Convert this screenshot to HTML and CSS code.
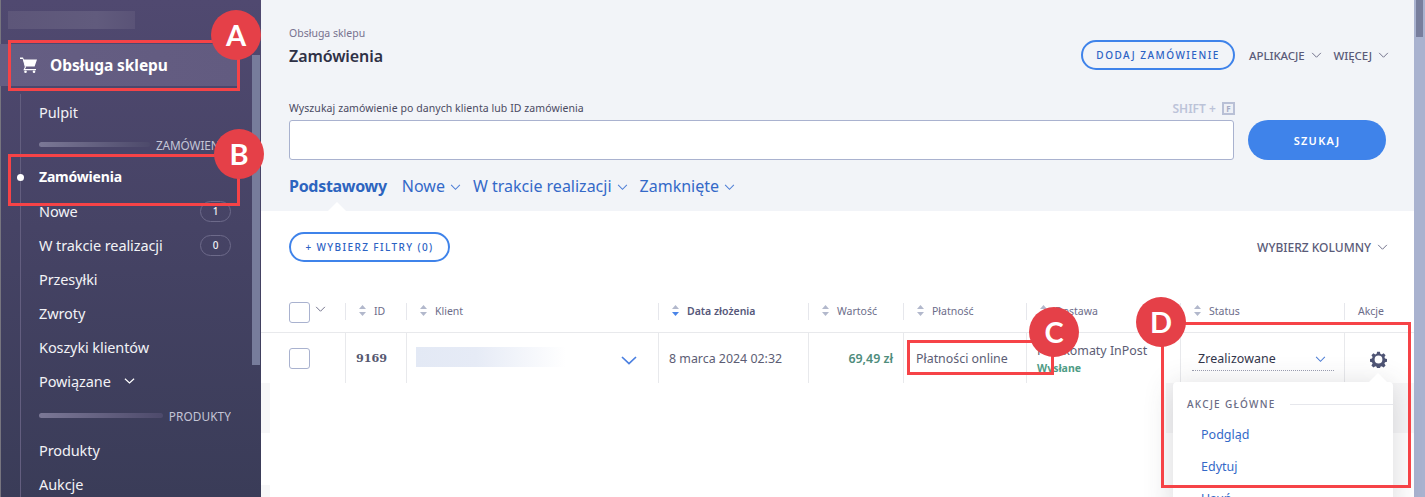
FILE: index.html
```html
<!DOCTYPE html>
<html lang="pl">
<head>
<meta charset="utf-8">
<title>Zamówienia</title>
<link rel="stylesheet" href="styles.css">
</head>
<body>
<div class="app">
  <aside class="sidebar">
    <div class="logo-blur"></div>
    <div class="section-head">
      <svg class="cart" viewBox="0 0 18 16"><path d="M0 .5h3l.8 2H17l-2.400 7H5.400L3 2H0z" fill="#fff"/><path d="M3.800 2.500 6 10.200l-1 1.800h11v1.200H3.400L4.800 10 2.600 1.600z" fill="#fff"/><circle cx="5.500" cy="14.700" r="1.300" fill="#fff"/><circle cx="14" cy="14.700" r="1.300" fill="#fff"/></svg>
      <span>Obsługa sklepu</span>
    </div>
    <nav class="menu">
      <div class="item">Pulpit</div>
      <div class="divider"><i></i><span>ZAMÓWIENIA</span></div>
      <div class="item active">Zamówienia</div>
      <div class="item">Nowe<b class="count">1</b></div>
      <div class="item">W trakcie realizacji<b class="count">0</b></div>
      <div class="item">Przesyłki</div>
      <div class="item">Zwroty</div>
      <div class="item">Koszyki klientów</div>
      <div class="item">Powiązane<svg class="chev-side" viewBox="0 0 12 8"><path d="M1 1.500 6 6l5-4.500" fill="none" stroke="#fff" stroke-width="1.300"/></svg></div>
      <div class="divider produkty"><i></i><span>PRODUKTY</span></div>
      <div class="item">Produkty</div>
      <div class="item">Aukcje</div>
    </nav>
    <div class="side-scroll"></div>
  </aside>

  <main class="main">
    <header class="top">
      <div class="title-row">
        <div>
          <div class="crumb">Obsługa sklepu</div>
          <h1>Zamówienia</h1>
        </div>
        <div class="top-actions">
          <button class="pill add">DODAJ ZAMÓWIENIE</button>
          <span class="top-link">APLIKACJE<svg class="chev" viewBox="0 0 12 8"><path d="M1 1 6 6l5-5" /></svg></span>
          <span class="top-link">WIĘCEJ<svg class="chev" viewBox="0 0 12 8"><path d="M1 1 6 6l5-5" /></svg></span>
        </div>
      </div>
      <div class="search-labels">
        <label>Wyszukaj zamówienie po danych klienta lub ID zamówienia</label>
        <span class="shift">SHIFT + <kbd>F</kbd></span>
      </div>
      <div class="search-row">
        <div class="search-input"></div>
        <button class="search-btn">SZUKAJ</button>
      </div>
      <div class="tabs">
        <span class="tab current">Podstawowy</span>
        <span class="tab">Nowe<svg class="chev blue" viewBox="0 0 12 8"><path d="M1 1 6 6l5-5" /></svg></span>
        <span class="tab">W trakcie realizacji<svg class="chev blue" viewBox="0 0 12 8"><path d="M1 1 6 6l5-5" /></svg></span>
        <span class="tab">Zamknięte<svg class="chev blue" viewBox="0 0 12 8"><path d="M1 1 6 6l5-5" /></svg></span>
      </div>
    </header>

    <section class="content">
      <div class="filter-row">
        <button class="pill filters">+ WYBIERZ FILTRY (0)</button>
        <span class="top-link columns">WYBIERZ KOLUMNY<svg class="chev" viewBox="0 0 12 8"><path d="M1 1 6 6l5-5" /></svg></span>
      </div>
      <div class="table">
        <div class="thead">
          <div class="th c-check"><span class="box"></span><svg class="chev head-chev" viewBox="0 0 12 8"><path d="M1 1 6 6l5-5" /></svg></div>
          <div class="th c-id"><svg class="sort" viewBox="0 0 7 11"><path d="M3.500 0 7 4H0z"/><path d="M0 7h7l-3.500 4z"/></svg>ID</div>
          <div class="th c-client"><svg class="sort" viewBox="0 0 7 11"><path d="M3.500 0 7 4H0z"/><path d="M0 7h7l-3.500 4z"/></svg>Klient</div>
          <div class="th c-date strong"><svg class="sort" viewBox="0 0 7 11"><path d="M3.500 0 7 4H0z"/><path class="on" d="M0 7h7l-3.500 4z"/></svg>Data złożenia</div>
          <div class="th c-value"><svg class="sort" viewBox="0 0 7 11"><path d="M3.500 0 7 4H0z"/><path d="M0 7h7l-3.500 4z"/></svg>Wartość</div>
          <div class="th c-pay"><svg class="sort" viewBox="0 0 7 11"><path d="M3.500 0 7 4H0z"/><path d="M0 7h7l-3.500 4z"/></svg>Płatność</div>
          <div class="th c-ship"><svg class="sort" viewBox="0 0 7 11"><path d="M3.500 0 7 4H0z"/><path d="M0 7h7l-3.500 4z"/></svg>Dostawa</div>
          <div class="th c-status"><svg class="sort" viewBox="0 0 7 11"><path d="M3.500 0 7 4H0z"/><path d="M0 7h7l-3.500 4z"/></svg>Status</div>
          <div class="th c-act">Akcje</div>
        </div>
        <div class="tr">
          <div class="td c-check"><span class="box"></span></div>
          <div class="td c-id num">9169</div>
          <div class="td c-client"><span class="blur"></span><svg class="chev client-chev" viewBox="0 0 16 9"><path d="M1 1l7 6.500L15 1" /></svg></div>
          <div class="td c-date">8 marca 2024 02:32</div>
          <div class="td c-value val">69,49 zł</div>
          <div class="td c-pay">Płatności online</div>
          <div class="td c-ship"><div class="ship-name">Paczkomaty InPost</div><div class="ship-state">Wysłane</div></div>
          <div class="td c-status"><div class="select">Zrealizowane<svg class="chev blue" viewBox="0 0 12 8"><path d="M1 1 6 6l5-5" /></svg></div></div>
          <div class="td c-act"><svg class="gear" viewBox="0 0 24 24"><path fill-rule="evenodd" d="M10 1h4l.6 3 2 .9 2.600-1.700 2.800 2.800-1.700 2.600.9 2 3 .6v4l-3 .6-.9 2 1.700 2.600-2.800 2.800-2.600-1.700-2 .9-.6 3h-4l-.6-3-2-.9-2.600 1.700-2.800-2.800 1.700-2.600-.9-2-3-.6v-4l3-.6.9-2-1.700-2.600 2.800-2.800 2.600 1.700 2-.9zM12 6.500a5.500 5.500 0 1 0 0 11 5.500 5.500 0 0 0 0-11z"/></svg></div>
        </div>
        <div class="ghost g1"></div>
        <div class="ghost g2"></div>
        <div class="ghost g3"></div>
      </div>
    </section>
  </main>
  <div class="page-scroll"><div class="page-thumb"></div></div>
</div>

<div class="dropdown">
  <div class="dd-head"><span>AKCJE GŁÓWNE</span><i></i></div>
  <a>Podgląd</a>
  <a>Edytuj</a>
  <a>Usuń</a>
</div>

<div class="mark m-a"></div>
<div class="mark m-b"></div>
<div class="mark m-c"></div>
<div class="mark m-d"></div>
<div class="badge b-a">A</div>
<div class="badge b-b">B</div>
<div class="badge b-c">C</div>
<div class="badge b-d">D</div>
</body>
</html>
```
FILE: styles.css
```css
* { box-sizing: border-box; }
html, body { margin: 0; height: 100%; overflow: hidden; }
body { font-family: "Noto Sans", "Open Sans", sans-serif; color: #4c4f6b; background: #fff; width: 1425px; height: 497px; position: relative; }
.app { display: flex; width: 1425px; height: 497px; overflow: hidden; }

/* sidebar */
.sidebar { width: 261px; flex: none; height: 497px; position: relative; overflow: hidden; background: linear-gradient(180deg, #504970 0%, #3a3c58 100%); color: #fff; box-shadow: inset 1px 0 0 #77757f; }
.logo-blur { width: 127px; height: 18px; margin: 11px 0 0 8px; background: linear-gradient(90deg, #5d5679, #615b7d 70%, #5a5377); }
.section-head { margin-top: 15px; width: 238px; height: 42px; display: flex; align-items: center; padding-left: 20px; gap: 12px; background: linear-gradient(90deg, #655e83, #625b80); font-size: 15.500px; font-weight: 700; letter-spacing: -.08px; }
.cart { width: 18px; height: 16px; }
.menu { position: relative; margin-left: 20px; padding-left: 18px; border-left: 1px solid #635e7f; padding-top: 1px; margin-top: 8px; height: 420px; }
.item { height: 34px; font-size: 14.500px; line-height: 34px; display: flex; align-items: center; letter-spacing: -.1px; color: #f2f2f6; padding-right: 30px; }
.item.active { font-size: 14px; font-weight: 700; letter-spacing: -.2px; color: #fff; position: relative; }
.item.active::before { content: ""; position: absolute; left: -22px; top: 14px; width: 7px; height: 7px; border-radius: 50%; background: #fff; }
.count { margin-left: auto; width: 31px; height: 21px; border: 1px solid #6d6a8a; border-radius: 11px; font-size: 10px; font-weight: 500; line-height: 19px; text-align: center; letter-spacing: 0; }
.chev-side { width: 11px; height: 8px; margin-left: 13px; }
.divider { height: 31px; display: flex; align-items: center; gap: 6px; font-size: 11.800px; color: #c4c5d6; letter-spacing: -.1px; width: 192px; white-space: nowrap; overflow: hidden; }
.divider i { flex: 1; height: 5px; border-radius: 3px; background: linear-gradient(90deg, #7b7896, #4d4a6b); }
.divider.produkty { height: 35px; letter-spacing: .1px; }
.divider.produkty span { padding-top: 1px; }
.side-scroll { position: absolute; left: 252px; top: 55px; width: 8px; height: 310px; background: #777c9b; }

/* main */
.main { width: 1153px; flex: none; display: flex; flex-direction: column; }
.top { height: 211px; background: #f2f4f8; padding: 25px 28px 0; position: relative; }
.title-row { display: flex; justify-content: space-between; }
.crumb { font-size: 10.500px; color: #77728f; line-height: 16px; }
h1 { margin: 4px 0 0; font-size: 16px; line-height: 22px; font-weight: 600; color: #2f3146; letter-spacing: -.08px; }
.top-actions { display: flex; align-items: center; height: 30px; margin-top: 15px; margin-right: -3px; }
.pill { font-family: inherit; border: 2px solid #3f83ea; border-radius: 15px; background: transparent; color: #2b62c4; font-weight: 500; letter-spacing: 1.500px; }
.add { width: 154px; height: 30px; font-size: 10px; padding: 0; margin-right: 14px; letter-spacing: 1.500px; }
.top-link { font-size: 11.500px; font-weight: 500; color: #5a5b78; display: inline-flex; align-items: center; letter-spacing: -.1px; }
.top-actions .top-link + .top-link { margin-left: 12px; }
.chev { width: 11px; height: 7px; margin-left: 6px; fill: none; stroke: #6d6e88; stroke-width: 1.100; }
.chev.blue { stroke: #4f7fd6; stroke-width: 1.200; }
.search-labels { display: flex; justify-content: space-between; width: 946px; margin: 28px 0 2px; height: 20px; align-items: center; }
.search-labels label { font-size: 10.500px; color: #4a4a62; letter-spacing: .07px; }
.shift { font-size: 12px; font-weight: 600; color: #bcc3d8; display: flex; align-items: center; gap: 3px; white-space: pre; letter-spacing: 0; }
kbd { width: 13px; height: 13px; border: 2px solid #b9c0d6; font: 700 8px/9px "Noto Sans", sans-serif; text-align: center; color: #a5acc5; background: #eef0f6; }
.search-row { display: flex; align-items: center; gap: 14px; }
.search-input { width: 946px; height: 40px; background: #fff; border: 1px solid #a9b2cf; border-radius: 3px; }
.search-btn { width: 138px; height: 40px; border: 0; border-radius: 20px; background: #3f83ea; color: #fff; font: 600 11px "Noto Sans", sans-serif; letter-spacing: 1.300px; }
.tabs { display: flex; align-items: center; gap: 12px; margin-top: 13px; height: 26px; }
.tab { font-size: 16px; color: #3469c8; display: inline-flex; align-items: center; letter-spacing: 0; }
.tab .chev { margin-left: 5px; margin-top: 2px; }
.tab.current { font-weight: 700; color: #2d64bf; letter-spacing: -.3px; margin-right: 3px; }
.top::after { content: ""; position: absolute; left: 67px; bottom: 0; border: 9px solid transparent; border-top: 0; border-bottom: 9px solid #fff; }
.content { flex: 1; padding: 21px 26px 0 28px; position: relative; }
.filter-row { display: flex; justify-content: space-between; align-items: center; height: 30px; }
.filters { width: 161px; height: 30px; font-size: 10px; padding: 0; letter-spacing: 1.400px; }
.columns { font-size: 12px; font-weight: 500; letter-spacing: 0; }
.table { margin: 27px -26px 0 -28px; position: relative; }
.thead { display: flex; height: 44px; border-bottom: 1px solid #e8e9ec; }
.tr { display: flex; height: 50px; }
.th { display: flex; align-items: center; height: 17px; margin-top: 14px; padding-bottom: 2px; font-size: 10.500px; color: #6c6d8a; border-left: 1px solid #e6e7ec; }
.th.strong { font-weight: 600; color: #56587a; }
.td { display: flex; align-items: center; font-size: 12.400px; color: #5c5d74; border-left: 1px solid #e8e9ec; padding-left: 10px; }
.th.c-check, .td.c-check { border-left: 0; }
.c-check { width: 84px; padding-left: 28px; }
.c-id { width: 61px; }
.c-client { width: 252px; }
.c-date { width: 150px; }
.c-value { width: 95px; }
.c-pay { width: 123px; }
.c-ship { width: 154px; }
.c-status { width: 164px; }
.c-act { width: 70px; }
.th.c-check { margin-top: 8px; height: 30px; padding-bottom: 0; }
.th .sort { width: 7px; height: 11px; margin: 0 8px 0 13px; fill: #b2b8cc; }
.th .sort .on { fill: #4a85e8; }
.th.c-act { padding-left: 13px; }
.box { width: 21px; height: 21px; border: 1px solid #a9b2cf; border-radius: 3px; background: #fff; flex: none; }
.head-chev { margin: 0 0 6px 5px; }
.td.num { font-family: "DejaVu Serif", serif; font-size: 11.200px; font-weight: 700; color: #565870; padding-left: 10px; }
.td.c-client { padding-left: 9px; }
.blur { width: 150px; height: 20px; margin-top: -3px; background: linear-gradient(90deg, #e3e9f5, #e6ebf6 40%, #fff 100%); }
.client-chev { width: 16px; height: 9px; stroke: #4a7fe0; stroke-width: 1.700; margin: 4px 0 0 55px; }
.val { justify-content: flex-end; padding-right: 10px; font-weight: 600; color: #4f8d7c; }
.td.c-pay { padding-left: 12px; }
.td.c-ship { display: block; padding-top: 9px; }
.ship-name { line-height: 18px; }
.ship-state { font-size: 10.500px; font-weight: 700; color: #4f9c85; line-height: 17px; }
.select { width: 142px; height: 24px; margin-left: 1px; margin-top: 2px; border-bottom: 1px dotted #9c9fb0; display: flex; align-items: center; justify-content: space-between; padding: 0 8px 0 6px; color: #33354a; letter-spacing: .1px; }
.select .chev { margin-top: 2px; }
.td.c-status { padding-left: 10px; }
.td.c-act { padding-left: 25px; }
.gear { width: 17px; height: 17px; margin-top: 3px; fill: #4e5474; }
.ghost { position: absolute; background: #f7f7f8; }
.g1 { left: 0; top: 94px; width: 9px; height: 50px; }
.g2 { left: 0; top: 196px; width: 9px; height: 50px; }
.g3 { left: 905px; top: 94px; width: 248px; height: 50px; }

/* page scrollbar */
.page-scroll { width: 11px; flex: none; background: #a9b2cf; }
.page-thumb { height: 37px; background: #787e9d; width: 7px; margin-left: 2px; }

/* dropdown */
.dropdown { position: absolute; left: 1173px; top: 382px; width: 220px; height: 130px; background: #fff; border-radius: 4px; box-shadow: 0 4px 30px rgba(60,60,70,.2); z-index: 3; padding-top: 14px; }
.dropdown::before { content: ""; position: absolute; left: 196px; top: -9px; border: 9px solid transparent; border-top: 0; border-bottom: 9px solid #fff; }
.dd-head { display: flex; align-items: center; padding-left: 14px; font-size: 10px; font-weight: 500; color: #6a6b84; letter-spacing: 1.300px; gap: 14px; height: 16px; }
.dd-head i { flex: 1; height: 1px; background: #e6e7ec; }
.dropdown a { display: block; padding-left: 28px; font-size: 12.500px; color: #3469c8; height: 32px; line-height: 32px; letter-spacing: 0; }
.dd-head + a { margin-top: 7px; }

/* annotations */
.mark { position: absolute; border: 3px solid #f64347; z-index: 4; }
.m-a { left: 8px; top: 40px; width: 232px; height: 51px; }
.m-b { left: 8px; top: 154px; width: 232px; height: 52px; }
.m-c { left: 907px; top: 340px; width: 147px; height: 35px; }
.m-d { left: 1161px; top: 322px; width: 250px; height: 166px; }
.badge { position: absolute; width: 50px; height: 50px; border-radius: 50%; background: #e54048; color: #fff; font: 700 29px/50px "Lato", "Noto Sans", sans-serif; text-align: center; z-index: 5; }
.b-a { left: 211px; top: 10px; }
.b-b { left: 214px; top: 129px; }
.b-c { left: 1029px; top: 307px; }
.b-d { left: 1136px; top: 297px; }
```
